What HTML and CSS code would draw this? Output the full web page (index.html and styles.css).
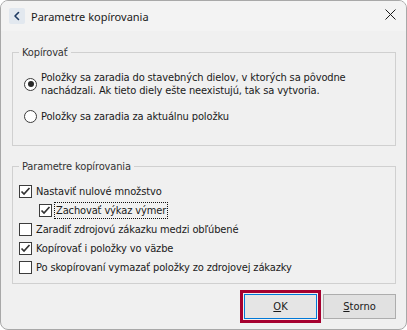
FILE: index.html
```html
<!DOCTYPE html>
<html lang="sk">
<head>
<meta charset="utf-8">
<title>Parametre kopírovania</title>
<link rel="stylesheet" href="styles.css">
</head>
<body>
<div class="window">
  <div class="titlebar">
    <span class="back">
      <svg width="16" height="16" viewBox="0 0 16 16"><path d="M9.5 4.5 L6 8 L9.5 11.5" fill="none" stroke="#1f3b63" stroke-width="1.6" stroke-linecap="round" stroke-linejoin="round"/></svg>
    </span>
    <span class="title">Parametre kopírovania</span>
    <span class="close">
      <svg width="11" height="11" viewBox="0 0 11 11"><path d="M0.5 0.5 L10.5 10.5 M10.5 0.5 L0.5 10.5" fill="none" stroke="#1a1a1a" stroke-width="1"/></svg>
    </span>
  </div>
  <div class="content">
    <fieldset class="group group-copy">
      <legend>Kopírovať</legend>
      <div class="radio-row">
        <span class="radio checked"></span>
        <span class="text">Položky sa zaradia do stavebných dielov, v ktorých sa pôvodne<br>nachádzali. Ak tieto diely ešte neexistujú, tak sa vytvoria.</span>
      </div>
      <div class="radio-row second">
        <span class="radio"></span>
        <span class="text">Položky sa zaradia za aktuálnu položku</span>
      </div>
    </fieldset>
    <fieldset class="group group-params">
      <legend>Parametre kopírovania</legend>
      <div class="check-row">
        <span class="cb checked"><svg width="11" height="11" viewBox="0 0 11 11"><path d="M1.5 5.5 L4 8 L9.5 2" fill="none" stroke="#333" stroke-width="1.7"/></svg></span>
        <span class="text">Nastaviť nulové množstvo</span>
      </div>
      <div class="check-row indent">
        <span class="cb checked"><svg width="11" height="11" viewBox="0 0 11 11"><path d="M1.5 5.5 L4 8 L9.5 2" fill="none" stroke="#333" stroke-width="1.7"/></svg></span>
        <span class="text focus">Zachovať výkaz výmer</span>
      </div>
      <div class="check-row">
        <span class="cb"></span>
        <span class="text">Zaradiť zdrojovú zákazku medzi obľúbené</span>
      </div>
      <div class="check-row">
        <span class="cb checked"><svg width="11" height="11" viewBox="0 0 11 11"><path d="M1.5 5.5 L4 8 L9.5 2" fill="none" stroke="#333" stroke-width="1.7"/></svg></span>
        <span class="text">Kopírovať i položky vo väzbe</span>
      </div>
      <div class="check-row">
        <span class="cb"></span>
        <span class="text">Po skopírovaní vymazať položky zo zdrojovej zákazky</span>
      </div>
    </fieldset>
    <div class="buttons">
      <button class="btn default"><u>O</u>K</button>
      <button class="btn"><u>S</u>torno</button>
    </div>
  </div>
</div>
</body>
</html>
```

FILE: styles.css
```css
html, body {
  margin: 0;
  padding: 0;
  background: #ffffff;
}

.window {
  width: 407px;
  height: 330px;
  box-sizing: border-box;
  border: 1px solid #a8a8a8;
  border-radius: 8px;
  background: #f0f0f0;
  overflow: hidden;
  display: flex;
  flex-direction: column;
  font-family: "DejaVu Sans Condensed", "DejaVu Sans", sans-serif;
  font-stretch: condensed;
  font-size: 11px;
  letter-spacing: -0.13px;
  color: #1a1a1a;
}

.titlebar {
  height: 30px;
  flex: none;
  background: #f3f3f3;
  display: flex;
  align-items: center;
  padding: 0 10px 0 8px;
}

.back {
  width: 16px;
  height: 16px;
  background: #e2e8ef;
  border-radius: 2px;
  display: flex;
}

.title {
  margin-left: 6px;
  font-family: "Noto Sans", sans-serif;
  font-stretch: normal;
  font-size: 11px;
  letter-spacing: 0;
  color: #1a1a1a;
}

.close {
  margin-left: auto;
  display: flex;
  margin-bottom: 3px;
}

.content {
  padding: 0 10px 0 11px;
  display: flex;
  flex-direction: column;
}

.group {
  margin: 0;
  border: 1px solid #d0d0d0;
  padding: 0 6px;
  min-width: 0;
}

.group legend {
  padding: 0 3px;
  margin-left: 0;
  line-height: 13px;
  color: #333;
}

.group-copy {
  margin-top: 15px;
  padding-top: 12px;
  padding-bottom: 22px;
}

.group-params {
  margin-top: 14px;
  padding-top: 9px;
  padding-bottom: 6px;
}

.radio-row {
  display: flex;
  align-items: center;
  margin-left: 5px;
  line-height: 13px;
}

.radio-row.second {
  margin-top: 13px;
}

.radio {
  width: 13px;
  height: 13px;
  box-sizing: border-box;
  border: 1px solid #3c3c3c;
  border-radius: 50%;
  background: #fff;
  margin-right: 4px;
  flex: none;
  display: flex;
  align-items: center;
  justify-content: center;
}

.radio.checked::after {
  content: "";
  width: 6px;
  height: 6px;
  border-radius: 50%;
  background: #2a2a2a;
}

.text {
  white-space: nowrap;
}

.check-row {
  height: 19px;
  display: flex;
  align-items: center;
  line-height: 13px;
}

.check-row.indent {
  padding-left: 20px;
}

.cb {
  width: 13px;
  height: 13px;
  box-sizing: border-box;
  border: 1px solid #3c3c3c;
  background: #fff;
  margin-right: 4px;
  flex: none;
  display: flex;
}

.indent .cb {
  margin-right: 2px;
}

.focus {
  border: 1px dotted #111;
  padding: 1px 1px;
}

.buttons {
  margin-top: 10px;
  display: flex;
  justify-content: flex-end;
  gap: 6px;
}

.btn {
  width: 73px;
  height: 25px;
  box-sizing: border-box;
  border: 1px solid #adadad;
  background: #e1e1e1;
  font-family: inherit;
  font-stretch: condensed;
  font-size: 11px;
  letter-spacing: 0;
  color: #1a1a1a;
  padding: 0;
  margin: 0;
}

.btn.default {
  border-color: #0078d7;
  background: #e5e5e5;
  outline: 3px solid #a5002f;
  outline-offset: 1px;
}
```
